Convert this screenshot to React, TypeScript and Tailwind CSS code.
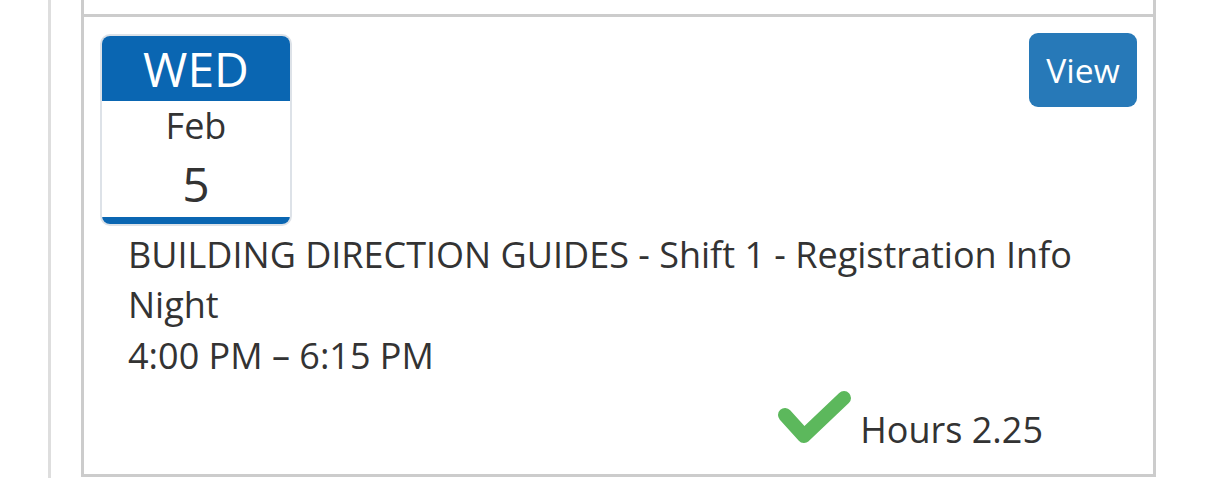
const shift = {
  day: 'WED',
  month: 'Feb',
  date: '5',
  title: 'BUILDING DIRECTION GUIDES - Shift 1 - Registration Info Night',
  time: '4:00 PM – 6:15 PM',
  hours: '2.25',
}

function CheckIcon() {
  return (
    <svg width="76" height="57" viewBox="0 0 76 57" className="shrink-0">
      <polyline
        points="9,26 28,47 68,9"
        fill="none"
        stroke="#5cb85c"
        strokeWidth="14"
        strokeLinecap="round"
        strokeLinejoin="round"
      />
    </svg>
  )
}

function DateBadge() {
  return (
    <div className="w-[192px] overflow-hidden rounded-[10px] border-2 border-[#dde2e8] bg-white text-center">
      <div className="h-[65px] bg-[#0a66b2] text-[48px] leading-[65px] text-white">{shift.day}</div>
      <div className="h-[50px] text-[36px] leading-[50px] text-[#333]">{shift.month}</div>
      <div className="h-[66px] text-[48px] leading-[66px] text-[#333]">{shift.date}</div>
      <div className="h-[7px] bg-[#0a66b2]" />
    </div>
  )
}

export default function App() {
  return (
    <div className="h-[478px] overflow-hidden bg-white font-['Open_Sans',sans-serif] text-[#333]">
      <div className="ml-[48px] h-full border-l-[3px] border-[#dedede] pl-[30px]">
        <div className="w-[1075px]">
          {/* tail of the previous item */}
          <div className="h-[17px] border-x-[3px] border-b-[3px] border-[#cccccc]" />

          <div className="border-x-[3px] border-b-[3px] border-[#cccccc] px-[16px] pt-[16px] pb-[18px]">
            <div className="flex items-start justify-between">
              <div className="pt-px">
                <DateBadge />
              </div>
              <button className="h-[74px] w-[108px] rounded-[9px] bg-[#2779b8] text-[33.6px] text-white">
                View
              </button>
            </div>

            <div className="mt-[4px] pl-[28px] text-[36px] leading-[50.4px]">
              <div>{shift.title}</div>
              <div>{shift.time}</div>
            </div>

            <div className="mt-[8px] flex items-start justify-end pr-[94px]">
              <CheckIcon />
              <span className="ml-[8px] mt-[16px] text-[36px] leading-[50.4px]">Hours {shift.hours}</span>
            </div>
          </div>
        </div>
      </div>
    </div>
  )
}
